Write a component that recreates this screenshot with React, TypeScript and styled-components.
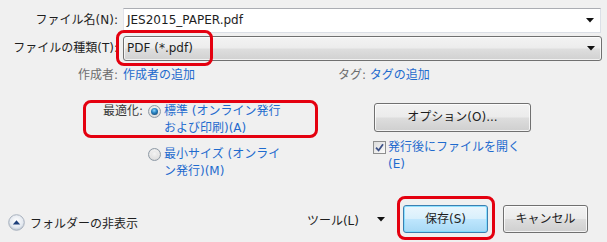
import styled, { createGlobalStyle } from 'styled-components'

const GlobalStyle = createGlobalStyle`
  html, body {
    margin: 0;
    padding: 0;
    background: #f0f0f0;
  }
  body {
    font-family: "DejaVu Sans", "Noto Sans CJK JP", sans-serif;
    font-size: 12px;
    color: #1e1e1e;
  }
`

const Dialog = styled.div`
  position: relative;
  box-sizing: border-box;
  width: 607px;
  height: 242px;
  padding: 8px 5px 9px 0;
  display: flex;
  flex-direction: column;
  background: #f0f0f0;
  overflow: hidden;
`

const FieldGrid = styled.div`
  display: grid;
  grid-template-columns: 118px 1fr;
  column-gap: 5px;
  row-gap: 3px;
  grid-auto-rows: 25px;
  align-items: center;
`

const FieldLabel = styled.div`
  text-align: right;
  white-space: nowrap;
  line-height: 17px;
`

const TextBox = styled.div`
  box-sizing: border-box;
  height: 25px;
  margin-right: 1px;
  display: flex;
  align-items: center;
  justify-content: space-between;
  padding: 0 6px 0 3px;
  background: #fff;
  border: 1px solid #dbdfe6;
  border-top-color: #abadb3;
  border-left-color: #e2e3ea;
  line-height: 17px;
`

const Combo = styled(TextBox)`
  margin-right: 0;
  border: 1px solid #707070;
  border-radius: 3px;
  background: linear-gradient(#f3f3f3 0%, #ececec 48%, #dedede 52%, #d1d1d1 100%);
  box-shadow: inset 0 0 0 1px rgba(255, 255, 255, 0.7);
`

const DropArrow = () => (
  <svg width="8" height="5" viewBox="0 0 8 5">
    <path d="M0 0 H8 L4 4.5 Z" fill="#111" />
  </svg>
)

const MetaRow = styled.div`
  margin-top: 6px;
  display: grid;
  grid-template-columns: 118px 1fr;
  column-gap: 5px;
  line-height: 17px;
  white-space: nowrap;
`

const MetaLabel = styled.span`
  color: #6d6d6d;
`

const MetaCell = styled.div`
  display: flex;
`

const Link = styled.span<{ $width?: number }>`
  color: #1f6bce;
  ${p => (p.$width ? `width: ${p.$width}px;` : '')}
`

const OptionsArea = styled.div`
  margin-top: 19px;
  display: flex;
  align-items: flex-start;
  line-height: 17px;
`

const OptLabel = styled.div`
  width: 143px;
  text-align: right;
  white-space: nowrap;
  color: #3a3a3a;
`

const RadioGroup = styled.div`
  margin-left: 5px;
  width: 226px;
  display: flex;
  flex-direction: column;
  gap: 9px;
`

const ChoiceRow = styled.div`
  display: flex;
  align-items: flex-start;
  gap: 3px;
`

const ChoiceText = styled.span`
  color: #1f6bce;
  white-space: nowrap;
`

const RadioMark = styled.span<{ $on?: boolean }>`
  box-sizing: border-box;
  flex: none;
  margin-top: 2px;
  width: 13px;
  height: 13px;
  border-radius: 50%;
  border: 1px solid #8e9aa6;
  background: radial-gradient(circle at 50% 40%, #ffffff 0%, #e6e6e6 55%, #c8c8c8 100%);
  display: flex;
  align-items: center;
  justify-content: center;

  &::after {
    content: '';
    width: 7px;
    height: 7px;
    border-radius: 50%;
    background: ${p =>
      p.$on
        ? 'radial-gradient(circle at 45% 35%, #8fd8ff 0%, #2b86c5 40%, #0c2f55 100%)'
        : 'radial-gradient(circle at 50% 40%, #f4f4f4 0%, #dcdcdc 100%)'};
  }
`

const RightColumn = styled.div`
  width: 157px;
  display: flex;
  flex-direction: column;
`

const Button = styled.button<{ $primary?: boolean; $width?: number; $height?: number }>`
  box-sizing: border-box;
  width: ${p => p.$width ?? 85}px;
  height: ${p => p.$height ?? 28}px;
  padding: 0;
  font: inherit;
  color: #1e1e1e;
  border-radius: 3px;
  border: 1px solid ${p => (p.$primary ? '#3c7fb1' : '#707070')};
  background: ${p =>
    p.$primary
      ? 'linear-gradient(#eaf6fd 0%, #d9f0fc 48%, #bee6fd 52%, #a7d9f5 100%)'
      : 'linear-gradient(#f2f2f2 0%, #ebebeb 48%, #dddddd 52%, #cfcfcf 100%)'};
  box-shadow: inset 0 0 0 1px ${p => (p.$primary ? 'rgba(120, 220, 255, 0.8)' : 'rgba(255, 255, 255, 0.75)')};
  line-height: 17px;
`

const CheckRow = styled.div`
  margin-top: 7px;
  margin-left: -1px;
  display: flex;
  align-items: flex-start;
  gap: 2px;
`

const CheckMark = styled.span`
  box-sizing: border-box;
  flex: none;
  margin-top: 2px;
  width: 13px;
  height: 13px;
  border: 1px solid #8e8f8f;
  background: linear-gradient(135deg, #dcdcdc 0%, #fbfbfb 100%);
  display: flex;
  align-items: center;
  justify-content: center;
`

const BottomBar = styled.div`
  margin-top: auto;
  height: 28px;
  display: flex;
  align-items: center;
`

const FolderToggle = styled.div`
  margin-left: 8px;
  padding-top: 7px;
  display: flex;
  align-items: center;
  gap: 5px;
  white-space: nowrap;
`

const Spacer = styled.div`
  flex: 1;
`

const ToolsMenu = styled.div`
  display: flex;
  align-items: center;
  gap: 18px;
  margin-right: 18px;
  white-space: nowrap;
`

const ButtonRow = styled.div`
  display: flex;
  gap: 15px;
  margin-right: 14px;
`

const Highlight = styled.div<{ $x: number; $y: number; $w: number; $h: number }>`
  position: absolute;
  box-sizing: border-box;
  left: ${p => p.$x}px;
  top: ${p => p.$y}px;
  width: ${p => p.$w}px;
  height: ${p => p.$h}px;
  border: 3px solid #e4000f;
  border-radius: 8px;
  pointer-events: none;
`

const FolderIcon = () => (
  <svg width="17" height="17" viewBox="0 0 17 17">
    <defs>
      <radialGradient id="fg" cx="50%" cy="40%" r="60%">
        <stop offset="0%" stopColor="#ffffff" />
        <stop offset="70%" stopColor="#e4e9f0" />
        <stop offset="100%" stopColor="#b9c3d0" />
      </radialGradient>
    </defs>
    <circle cx="8.5" cy="8.5" r="7.8" fill="url(#fg)" stroke="#a9b2be" strokeWidth="1" />
    <path d="M4.8 10.4 H12.2 L8.5 6.3 Z" fill="#1d3f7a" />
  </svg>
)

const Tick = () => (
  <svg width="9" height="9" viewBox="0 0 9 9">
    <path d="M1 4.6 L3.6 7.4 L8 1.2" fill="none" stroke="#3e5288" strokeWidth="1.8" />
  </svg>
)

export default function App() {
  return (
    <>
      <GlobalStyle />
      <Dialog>
        <FieldGrid>
          <FieldLabel>ファイル名(N):</FieldLabel>
          <TextBox>
            <span>JES2015_PAPER.pdf</span>
            <DropArrow />
          </TextBox>
          <FieldLabel>ファイルの種類(T):</FieldLabel>
          <Combo>
            <span>PDF (*.pdf)</span>
            <DropArrow />
          </Combo>
        </FieldGrid>

        <MetaRow>
          <FieldLabel><MetaLabel>作成者:</MetaLabel></FieldLabel>
          <MetaCell>
            <Link $width={215}>作成者の追加</Link>
            <MetaLabel>タグ:&nbsp;</MetaLabel>
            <Link>タグの追加</Link>
          </MetaCell>
        </MetaRow>

        <OptionsArea>
          <OptLabel>最適化:</OptLabel>
          <RadioGroup>
            <ChoiceRow>
              <RadioMark $on />
              <ChoiceText>標準 (オンライン発行<br />および印刷)(A)</ChoiceText>
            </ChoiceRow>
            <ChoiceRow>
              <RadioMark />
              <ChoiceText>最小サイズ (オンライ<br />ン発行)(M)</ChoiceText>
            </ChoiceRow>
          </RadioGroup>
          <RightColumn>
            <Button $width={157} $height={29}>オプション(O)...</Button>
            <CheckRow>
              <CheckMark><Tick /></CheckMark>
              <ChoiceText>発行後にファイルを開く<br />(E)</ChoiceText>
            </CheckRow>
          </RightColumn>
        </OptionsArea>

        <BottomBar>
          <FolderToggle>
            <FolderIcon />
            <span>フォルダーの非表示</span>
          </FolderToggle>
          <Spacer />
          <ToolsMenu>
            <span>ツール(L)</span>
            <DropArrow />
          </ToolsMenu>
          <ButtonRow>
            <Button $primary>保存(S)</Button>
            <Button>キャンセル</Button>
          </ButtonRow>
        </BottomBar>

        <Highlight $x={116} $y={30} $w={97} $h={36} />
        <Highlight $x={83} $y={100} $w={235} $h={38} />
        <Highlight $x={397} $y={196} $w={98} $h={44} />
      </Dialog>
    </>
  )
}
